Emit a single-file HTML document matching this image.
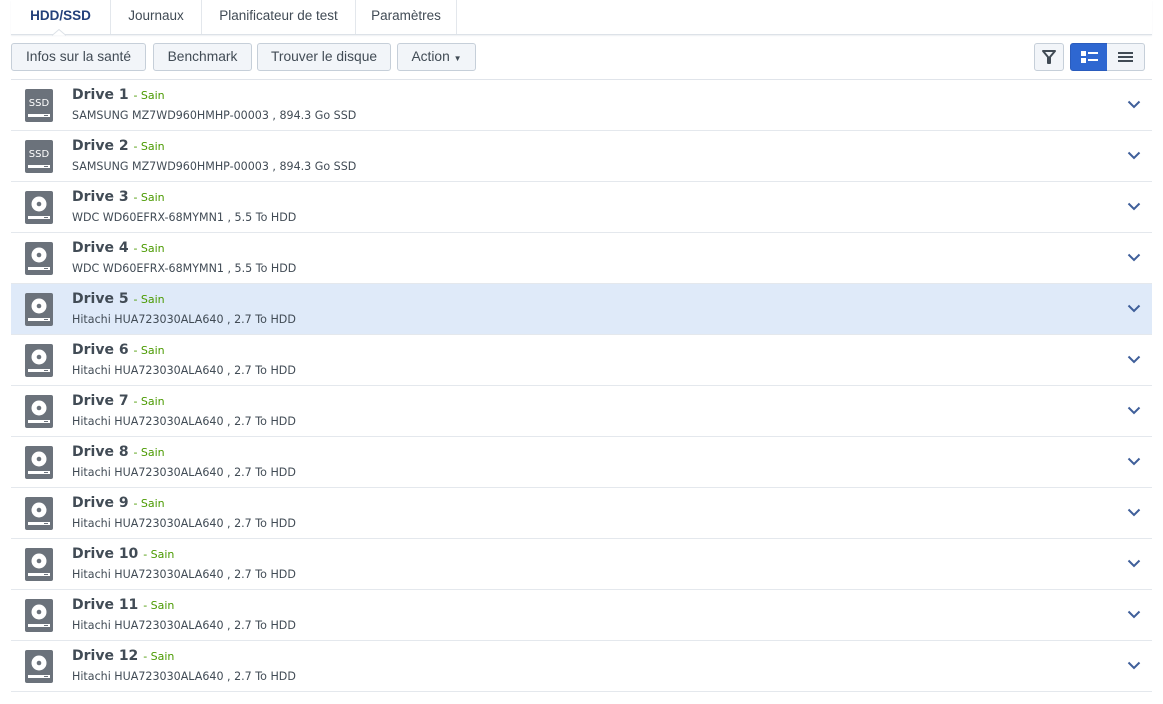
<!DOCTYPE html>
<html><head><style>
body{margin:0;background:#fff;font-family:"DejaVu Sans",Verdana,sans-serif;color:#414b55;width:1163px;height:704px;overflow:hidden;position:relative}
.tabs{position:absolute;left:11px;top:0;width:1141px;height:34px;border-bottom:1px solid #dde2e8;box-shadow:0 1px 1px #eef0f3}
.tab{position:absolute;top:0;height:34px;line-height:32px;font-size:13.5px;font-family:"Liberation Sans",sans-serif;color:#414b55;text-align:center;border-right:1px solid #e3e7ec}
.tab.a{font-weight:bold;color:#23407a;font-size:13.5px}
.btn{position:absolute;top:43px;height:26px;border:1px solid #c6cfd9;border-radius:3px;background:#f2f5f9;font-family:"Liberation Sans",sans-serif;font-size:13.8px;line-height:26px;text-align:center;color:#414b55}
.row{position:absolute;left:11px;width:1141px;height:50px;border-bottom:1px solid #e4e8ed}
.row.sel{background:#dfeaf9}
.t{position:absolute;left:61px;top:7px;font-size:14px;font-weight:bold;color:#414b55}
.t span{font-weight:normal;font-size:11px;color:#4a9a00}
.s{position:absolute;left:61px;top:29px;font-size:11.1px;color:#414b55}
.ic{position:absolute;left:14px;top:9px}
.ch{position:absolute;left:1116px;top:20px}
</style></head><body>
<div class="tabs">
<div class="tab a" style="left:0;width:99px">HDD/SSD</div>
<div class="tab" style="left:100px;width:90px">Journaux</div>
<div class="tab" style="left:191px;width:153px">Planificateur de test</div>
<div class="tab" style="left:345px;width:100px">Paramètres</div>
</div>
<svg style="position:absolute;left:52px;top:29px" width="14" height="7"><path d="M0 6.5 L7 0.5 L14 6.5" fill="#fff" stroke="#dde2e8"/></svg>
<div class="btn" style="left:11px;width:133px">Infos sur la santé</div>
<div class="btn" style="left:153px;width:97px">Benchmark</div>
<div class="btn" style="left:257px;width:132px">Trouver le disque</div>
<div class="btn" style="left:397px;width:77px">Action <span style="font-size:8px">▼</span></div>
<div class="btn" style="left:1034px;width:28px"><svg width="16" height="16" style="margin-top:5px"><path d="M2 2 H14 L9 8 V14 H7 V8 Z" fill="none" stroke="#414b55" stroke-width="2" stroke-linejoin="round"/></svg></div>
<div class="btn" style="left:1070px;width:37px;background:#2e67d1;border-color:#2a5cbd;border-radius:3px 0 0 3px"><svg width="18" height="14" style="margin-top:6px"><rect x="0" y="1" width="5" height="5" fill="#fff"/><rect x="0" y="8" width="5" height="5" fill="#fff"/><rect x="7" y="2" width="10" height="2" fill="#fff"/><rect x="7" y="9" width="10" height="2" fill="#fff"/></svg></div>
<div class="btn" style="left:1107px;width:37px;border-left:none;border-radius:0 3px 3px 0"><svg width="15" height="12" style="margin-top:7px"><rect y="1" width="15" height="2" fill="#414b55"/><rect y="5" width="15" height="2" fill="#414b55"/><rect y="9" width="15" height="2" fill="#414b55"/></svg></div>
<div style="position:absolute;left:11px;top:79px;width:1141px;border-top:1px solid #e0e4ea"></div>
<div id="rows"></div>
<script>
var d=[["SAMSUNG MZ7WD960HMHP-00003 , 894.3 Go SSD",1],["SAMSUNG MZ7WD960HMHP-00003 , 894.3 Go SSD",1],["WDC WD60EFRX-68MYMN1 , 5.5 To HDD",0],["WDC WD60EFRX-68MYMN1 , 5.5 To HDD",0]];
for(var i=4;i<12;i++)d.push(["Hitachi HUA723030ALA640 , 2.7 To HDD",0]);
var h="";
d.forEach(function(r,i){
var ic=r[1]?'<svg class="ic" width="28" height="33"><rect width="28" height="33" rx="2" fill="#6b727b"/><text x="14" y="17" font-family="DejaVu Sans" font-size="10" fill="#fff" text-anchor="middle">SSD</text><rect x="3" y="25" width="22" height="3" fill="#fff"/><rect x="19" y="26" width="4" height="1" fill="#6b727b"/></svg>'
:'<svg class="ic" width="28" height="33"><rect width="28" height="33" rx="2" fill="#6b727b"/><circle cx="14" cy="13" r="7.5" fill="#fff"/><circle cx="14" cy="13" r="2.3" fill="#6b727b"/><rect x="3" y="25" width="22" height="3" fill="#fff"/><rect x="19" y="26" width="4" height="1" fill="#6b727b"/></svg>';
h+='<div class="row'+(i==4?' sel':'')+'" style="top:'+(80+i*51)+'px">'+ic+'<div class="t">Drive '+(i+1)+' <span>- Sain</span></div><div class="s">'+r[0]+'</div><svg class="ch" width="14" height="9"><path d="M1.5 1.5 L7 7 L12.5 1.5" fill="none" stroke="#3f5f9a" stroke-width="2"/></svg></div>';
});
document.getElementById("rows").innerHTML=h;
</script>
</body></html>
